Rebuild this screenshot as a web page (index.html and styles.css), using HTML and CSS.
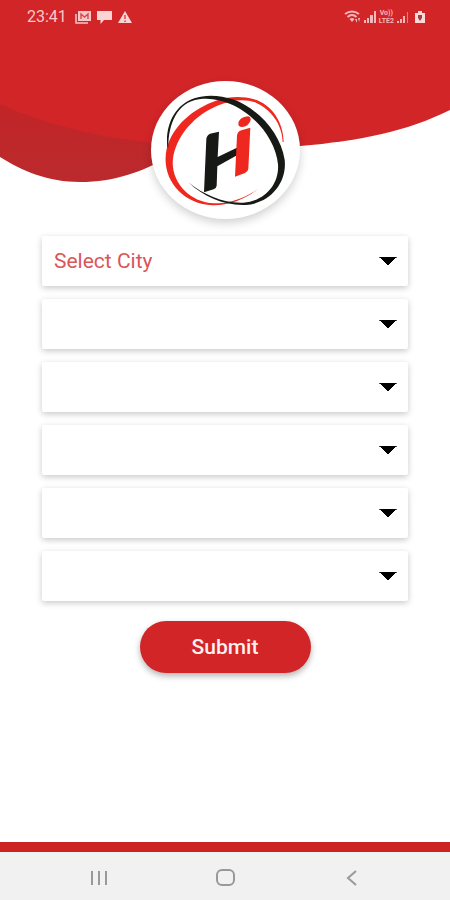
FILE: index.html
```html
<!DOCTYPE html>
<html lang="en">
<head>
<meta charset="utf-8">
<meta name="viewport" content="width=device-width, initial-scale=1">
<title>Select City</title>
<link rel="stylesheet" href="styles.css">
</head>
<body>
<header class="hero">
  <svg class="wave" viewBox="0 0 450 183" preserveAspectRatio="none" aria-hidden="true">
    <defs>
      <linearGradient id="shade" x1="0" y1="0" x2="0" y2="1">
        <stop offset="0.5" stop-color="#c32427"/>
        <stop offset="1" stop-color="#bb2a2d"/>
      </linearGradient>
    </defs>
    <path fill="url(#shade)" d="M0 0H240V112C190 140 150 182 80 182C48 182 22 171 0 157Z"/>
    <path fill="#d22528" d="M0 0H450V110C408 131 360 141 300 146C180 151 80 141 0 104Z"/>
  </svg>
  <div class="status">
    <div class="status-group">
      <span class="clock">23:41</span>
      <svg width="16" height="14" viewBox="0 0 16 14" aria-hidden="true"><path d="M3 1H16V11H3Z" fill="#f8c6c6"/><path d="M1 4V13H13" fill="none" stroke="#f8c6c6" stroke-width="1.5"/><path d="M6 9V4L9.500 7L13 4V9" fill="none" stroke="#d8484a" stroke-width="1.400"/></svg>
      <svg width="15" height="14" viewBox="0 0 15 14" aria-hidden="true"><path d="M0 1H15V10H7L3.500 14V10H0Z" fill="#fbd3d3"/></svg>
      <svg width="14" height="14" viewBox="0 0 14 14" aria-hidden="true"><path d="M7 1L14 13H0Z" fill="#fbd3d3"/><path d="M7 5V9M7 10.500V12" stroke="#d8484a" stroke-width="1.500"/></svg>
    </div>
    <div class="status-group status-right">
      <svg width="18" height="14" viewBox="0 0 18 14" aria-hidden="true"><g fill="none" stroke="#f5b8b8" stroke-width="2"><path d="M1 4Q8-1 15 4M3.500 7Q8 3 12.500 7"/></g><path d="M5.500 9Q8 7 10.500 9L8 12ZM11 9h2v4zM14 8h2l-1 4z" fill="#f5b8b8"/></svg>
      <svg width="13" height="14" viewBox="0 0 13 14" aria-hidden="true"><path d="M0 10h2v3H0zM3 8h2v5H3zM6 5h3v8H6zM10 1h2v12h-2z" fill="#f5b8b8"/></svg>
      <span class="volte"><span>Vo))</span><span>LTE2</span></span>
      <svg width="13" height="14" viewBox="0 0 13 14" aria-hidden="true"><path d="M1 11h2v2H1zM4 9h2v4H4zM7 6h2v7H7z" fill="#f5b8b8"/><path d="M11 2h1v11h-1z" fill="#e58082"/></svg>
      <svg class="battery" width="10" height="14" viewBox="0 0 10 14" aria-hidden="true"><path d="M3 1h4v2h3v10H0V3h3z" fill="#fbd9d9"/><path d="M3 5h4v3L5 11L3 8z" fill="#9c4244"/></svg>
    </div>
  </div>
  <div class="badge">
    <svg viewBox="33 33 447 414" role="img" aria-label="Hi">
      <path fill="#ef281f" d="M431 216C430 155 394 103 342 88C310 79 272 78 232 91C157 116 98 169 80 236C61 325 125 402 217 406C266 407 312 390 353 358C309 387 267 400 222 400C146 397 87 331 100 258C114 192 164 136 232 107C270 90 315 85 345 97C393 118 427 164 428 216Z"/>
      <path fill="#171915" d="M85 232C85 163 111 97 177 88C214 83 241 91 269 101C343 131 407 207 414 283C418 339 379 392 310 398C253 401 193 376 145 337C190 380 254 408 317 405C388 401 442 341 434 269C421 190 358 118 279 88C242 76 199 72 163 85C104 105 75 165 82 232Z"/>
      <path fill="#171915" d="M210 191L237 185L233 261L294 232L291 256L232 289L230 347Q229 354 221 358L192 367L199 207Q200 196 210 191Z"/>
      <path fill="#ef281f" d="M304 181L331 173L325 296Q324 305 315 309L285 320L291 197Q292 185 304 181ZM296 167C291 150 309 139 325 139C339 142 330 164 316 169Q304 174 296 167Z"/>
    </svg>
  </div>
</header>
<main>
  <form class="form">
    <select class="field" aria-label="Select City"><option>Select City</option></select>
    <select class="field" aria-label="Option 2"><option label=" "></option></select>
    <select class="field" aria-label="Option 3"><option label=" "></option></select>
    <select class="field" aria-label="Option 4"><option label=" "></option></select>
    <select class="field" aria-label="Option 5"><option label=" "></option></select>
    <select class="field" aria-label="Option 6"><option label=" "></option></select>
    <button class="submit" type="button">Submit</button>
  </form>
</main>
<nav class="navbar" aria-label="System">
  <button type="button" aria-label="Recent apps"><svg width="20" height="20" viewBox="0 0 20 20"><path d="M3 3v14M10 3v14M17 3v14"/></svg></button>
  <button type="button" aria-label="Home"><svg width="20" height="20" viewBox="0 0 20 20"><rect x="2" y="2" width="17" height="15" rx="5"/></svg></button>
  <button type="button" aria-label="Back"><svg width="20" height="20" viewBox="0 0 20 20"><path d="M15 3L7 10L15 17"/></svg></button>
</nav>
</body>
</html>
```
FILE: styles.css
```css
* {
  box-sizing: border-box;
}

body {
  margin: 0;
  min-height: 100vh;
  display: flex;
  flex-direction: column;
  background: #fff;
  font-family: Roboto, "Liberation Sans", sans-serif;
}

.hero {
  position: relative;
  display: flex;
  flex-direction: column;
  align-items: center;
}

.wave {
  position: absolute;
  top: 0;
  left: 0;
  width: 100%;
  height: 183px;
}

.status {
  position: relative;
  align-self: stretch;
  display: flex;
  justify-content: space-between;
  padding: 8px 25px 0 27px;
  height: 36px;
}

.status-group {
  display: flex;
  align-items: center;
  gap: 6px;
  height: 18px;
}

.status-right {
  gap: 2px;
}

.clock {
  margin-right: 2px;
  color: #f9c9c9;
  font-size: 16px;
  line-height: 18px;
}

.volte {
  display: flex;
  flex-direction: column;
  align-items: center;
  color: #f5b8b8;
  font-size: 7px;
  font-weight: 700;
  line-height: 8px;
}

.battery {
  margin-left: 4px;
}

.badge {
  position: relative;
  width: 149px;
  height: 138px;
  margin-top: 45px;
  border-radius: 50%;
  background: #fff;
  box-shadow: 0 4px 10px rgba(0, 0, 0, 0.18);
}

.badge svg {
  display: block;
  width: 100%;
  height: 100%;
}

main {
  flex: 1;
  padding: 17px 42px 24px;
}

.form {
  display: flex;
  flex-direction: column;
  gap: 13px;
}

.field {
  appearance: none;
  width: 100%;
  height: 50px;
  padding: 0 40px 0 12px;
  border: 0;
  border-radius: 2px;
  background-color: #fff;
  background-image:
    linear-gradient(to bottom right, #000 50%, transparent 51%),
    linear-gradient(to bottom left, #000 50%, transparent 51%);
  background-position: right 11px top 21px, right 20px top 21px;
  background-size: 9px 8px;
  background-repeat: no-repeat;
  box-shadow: 0 2px 6px rgba(0, 0, 0, 0.22);
  color: #d9565a;
  font: 400 21px/24px Roboto, "Liberation Sans", sans-serif;
}

.submit {
  align-self: center;
  width: 171px;
  height: 52px;
  margin-top: 7px;
  border: 0;
  border-radius: 26px;
  background: #d22528;
  box-shadow: 0 3px 6px rgba(0, 0, 0, 0.3);
  color: #fff0f0;
  font: 500 21px/24px Roboto, "Liberation Sans", sans-serif;
}

.navbar {
  display: flex;
  justify-content: center;
  gap: 82px;
  height: 58px;
  padding-top: 4px;
  border-top: 10px solid #cc2222;
  background: #f1f1f1;
}

.navbar button {
  display: grid;
  place-items: center;
  width: 44px;
  height: 44px;
  padding: 0;
  border: 0;
  background: none;
}

.navbar svg {
  fill: none;
  stroke: #999;
  stroke-width: 2;
}
```
